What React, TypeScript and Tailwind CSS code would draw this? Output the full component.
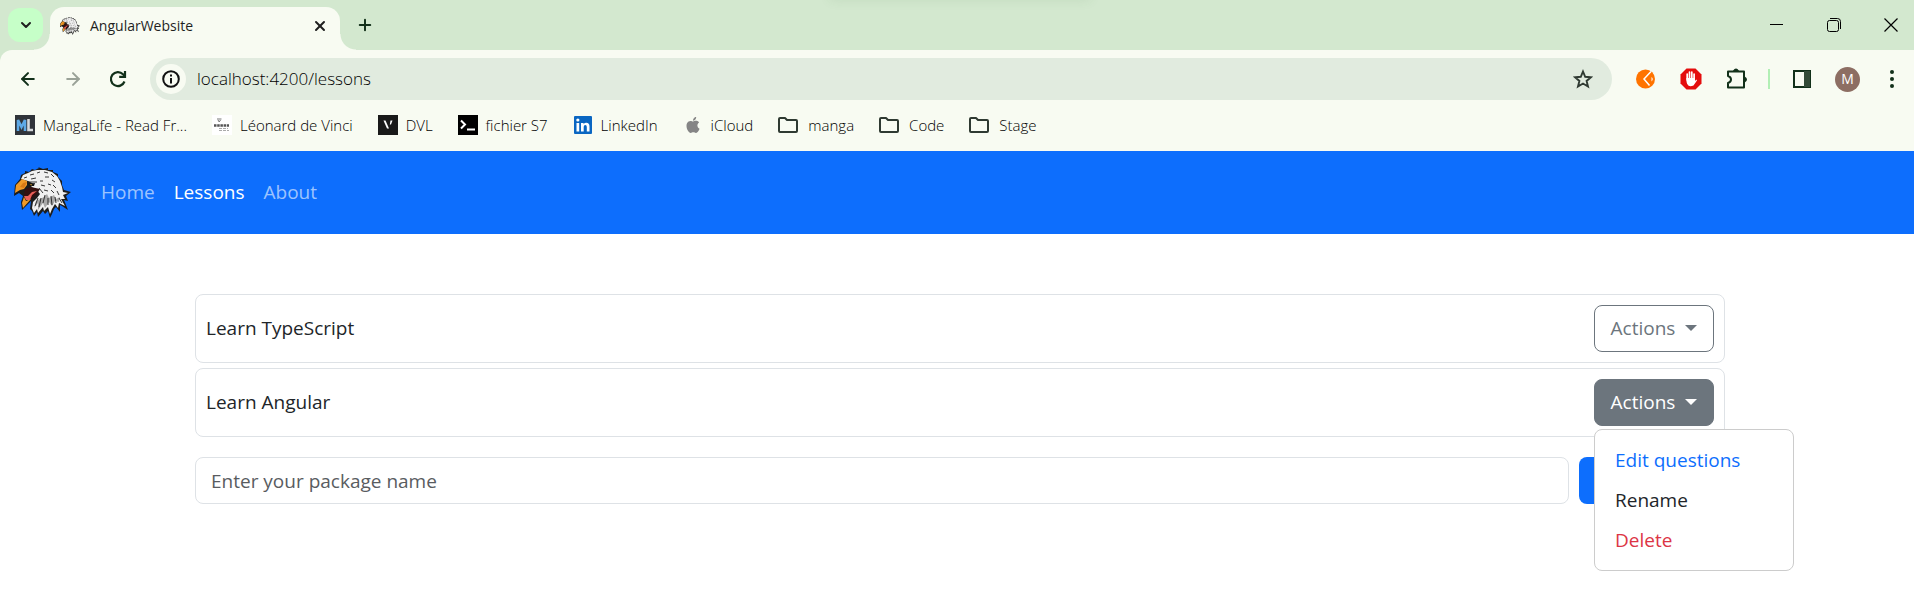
import { ArrowLeft, ArrowRight, ChevronDown, Plus, X } from "lucide-react";
import type { ReactNode } from "react";

function Eagle({ className }: { className: string }) {
  return (
    <svg viewBox="0 0 57 51" className={className} aria-hidden="true">
      <path
        d="M6 12 L7 8 L11 6 L11 4 L15 5 L18 2 L21 3 L25 1 L24 0 L29 2 L34 1 L34 3 L39 3 L39 5 L44 7 L44 10 L48 14 L48 18 L50 23 L57 25 L52 29 L54 34 L50 33 L54 43 L48 39 L46 38 L46 45 L42 40 L40 42 L38 47 L36 51 L34 44 L31 47 L29 44 L24 50 L23 45 L20 49 L18 44 L16 42 L17 34 L8 43 L7 35 L9 29 L5 26 L0 29 L1 18 Z"
        fill="#1c1c1c"
      />
      <path
        d="M7 12 L9 8 L14 6 L18 4 L23 3 L31 3 L38 5 L43 9 L46 14 L48 20 L49 25 L54 26 L49 28 L51 32 L47 32 L51 39 L45 36 L44 41 L41 37 L38 42 L36 47 L34 40 L30 44 L29 40 L24 46 L23 42 L20 46 L18 41 L19 35 L23 31 L26 27 L22 22 L17 20 L20 17 L14 14 Z"
        fill="#f0f0f0"
      />
      <path
        d="M30 30 L33 27 L35 31 L40 28 L42 32 L46 30 L45 35 L41 34 L38 39 L35 35 L31 41 L29 36 L24 43 L24 36 L20 41 L22 34 Z"
        fill="#a8a8a8"
      />
      <path d="M1 26 L2 18 L8 12 L13 14 L13 18 L10 22 L6 23 Z M9 41 L8 36 L10 30 L12 34 L17 32 Z" fill="#f09a28" />
      <path d="M6 20 L9 16 L13 15 L10 21 Z" fill="#d97a16" />
      <path d="M11 22 L17 20 L26 22 L23 27 L17 32 L12 33 L10 28 Z" fill="#341010" />
      <path d="M10 29 L14 29 L18 25 L23 24 L18 28 L16 33 L12 33 Z" fill="#ea5f58" />
      <path d="M14 17 L21 16 L20 19 L16 19 Z" fill="#141414" />
      <path d="M15.500 17.500 L18 17.200 L17.500 18.500 Z" fill="#e9a92c" />
      <path
        d="M10 11 L13 10 M16 8 L20 7 M23 6 L26 5 M30 5 L34 6 M37 7 L40 10 M17 12 L22 11 M31 10 L35 10 M38 13 L41 15 M13 15 L23 15 M26 14 L29 14 M39 18 L42 21 M27 18 L31 19 M34 17 L37 18 M30 23 L34 24 M37 23 L40 26 M43 24 L45 28 M25 21 L29 26 M24 31 L21 39 M27 31 L25 40 M31 28 L29 36 M34 31 L34 38 M37 29 L38 38 M41 30 L42 36 M45 31 L48 36"
        stroke="#222"
        strokeWidth=".9"
        fill="none"
      />
    </svg>
  );
}

function Folder() {
  return (
    <svg viewBox="0 0 20 18" className="h-[18px] w-5" fill="none" stroke="#2f3a32" strokeWidth="2" strokeLinejoin="round" aria-hidden="true">
      <path d="M1 3 Q1 2 2 2 H7 L9 4 H18 Q19 4 19 5 V15 Q19 16 18 16 H2 Q1 16 1 15 Z" />
    </svg>
  );
}

function Bookmark({ icon, label, folder }: { icon: ReactNode; label: string; folder?: boolean }) {
  return (
    <a href="#" className={`flex items-center whitespace-nowrap ${folder ? "gap-[10px]" : "gap-2"}`}>
      <span className="flex w-5 justify-center">{icon}</span>
      {label}
    </a>
  );
}

const bookmarks = [
  {
    label: "MangaLife - Read Fr...",
    icon: (
      <svg viewBox="0 0 20 20" className="size-5" aria-hidden="true">
        <path d="M0 0H20V20H0Z" fill="#30343a" />
        <path d="M3 16V5L6.500 12L10 5V16" fill="none" stroke="#5ea9e6" strokeWidth="2.600" />
        <path d="M13.500 4V15H18" fill="none" stroke="#d6d9dc" strokeWidth="2.600" />
      </svg>
    ),
  },
  {
    label: "Léonard de Vinci",
    icon: (
      <svg viewBox="0 0 20 20" className="size-5" aria-hidden="true">
        <path d="M0 0H20V20H0Z" fill="#fff" />
        <path d="M5 4H9.500M6 5L7.200 7L8.500 5" fill="none" stroke="#777" />
        <path d="M2 10.500H17" stroke="#555" strokeWidth="2.500" strokeDasharray="2.500 .7" />
        <path d="M7 13.500H16M7 15.500H17" stroke="#aaa" strokeDasharray="3 1" />
      </svg>
    ),
  },
  {
    label: "DVL",
    icon: (
      <svg viewBox="0 0 20 20" className="size-5" aria-hidden="true">
        <path d="M0 0H20V20H0Z" fill="#191919" />
        <path d="M5.500 5.500H7.500L11 13.500H9ZM12.500 5.500H14.500L13 9.500H11.800Z" fill="#fff" />
      </svg>
    ),
  },
  {
    label: "fichier S7",
    icon: (
      <svg viewBox="0 0 20 20" className="size-5" aria-hidden="true">
        <path d="M0 0H20V20H0Z" fill="#000" />
        <path d="M3 5.500L7 9.500L3 13.500M9 14.500H17" fill="none" stroke="#fff" strokeWidth="2" />
      </svg>
    ),
  },
  {
    label: "LinkedIn",
    icon: (
      <svg viewBox="0 0 18 18" className="size-[18px]" aria-hidden="true">
        <rect width="18" height="18" rx="1" fill="#0a66c2" />
        <path d="M2.500 7H5.200V15.500H2.500ZM7 7H9.600V8.200Q10.500 6.800 12.300 6.800Q15.500 6.800 15.500 10.500V15.500H12.800V11Q12.800 9.100 11.300 9.100Q9.700 9.100 9.700 11V15.500H7Z" fill="#fff" />
        <circle cx="3.850" cy="4" r="1.600" fill="#fff" />
      </svg>
    ),
  },
  {
    label: "iCloud",
    icon: (
      <svg viewBox="0 0 24 24" className="size-4" fill="#858585" aria-hidden="true">
        <path d="M12.152 6.896c-.948 0-2.415-1.078-3.960-1.040-2.040.027-3.910 1.183-4.961 3.014-2.117 3.675-.546 9.103 1.519 12.090 1.013 1.454 2.208 3.090 3.792 3.039 1.520-.065 2.090-.987 3.935-.987 1.831 0 2.350.987 3.960.948 1.637-.026 2.676-1.480 3.676-2.948 1.156-1.688 1.636-3.325 1.662-3.415-.039-.013-3.182-1.221-3.220-4.857-.026-3.040 2.480-4.494 2.597-4.559-1.429-2.090-3.623-2.324-4.390-2.376-2-.156-3.675 1.090-4.610 1.090zM15.530 3.830c.843-1.012 1.400-2.427 1.245-3.830-1.207.052-2.662.805-3.532 1.818-.780.896-1.454 2.338-1.273 3.714 1.338.104 2.715-.688 3.559-1.701" />
      </svg>
    ),
  },
  { label: "manga", icon: <Folder />, folder: true },
  { label: "Code", icon: <Folder />, folder: true },
  { label: "Stage", icon: <Folder />, folder: true },
];

function Browser() {
  return (
    <header className="text-sm text-[#1f1f1f]">
      <div className="relative flex h-[50px] items-end overflow-hidden bg-[#d3e8cf]">
        <div className="absolute -top-5 left-[830px] h-5 w-[260px] shadow-[0_0_12px_rgba(60,110,60,0.10)]" />
        <div className="flex h-full w-[50px] items-center pl-2">
          <button aria-label="Search tabs" className="flex h-[34px] w-[35px] items-center justify-center rounded-xl bg-[#c6ffc8]">
            <ChevronDown size={16} strokeWidth={3} />
          </button>
        </div>
        <div className="relative flex h-[43px] w-[290px] items-center rounded-t-[14px] bg-[#f8fbf2] pr-3 pb-[6px] pl-[10px]">
          <div className="absolute bottom-0 -left-4 size-4 bg-[radial-gradient(circle_at_0_0,transparent_15px,#f8fbf2_16px)]" />
          <div className="absolute -right-4 bottom-0 size-4 bg-[radial-gradient(circle_at_100%_0,transparent_15px,#f8fbf2_16px)]" />
          <Eagle className="h-5 w-5" />
          <span className="ml-[10px] flex-1">AngularWebsite</span>
          <button aria-label="Close tab" className="flex size-4 items-center justify-center">
            <X size={16} strokeWidth={3} />
          </button>
        </div>
        <button aria-label="New tab" className="mb-4 ml-4 text-[#12301a]">
          <Plus size={18} strokeWidth={2.6} />
        </button>
        <div className="ml-auto flex h-full items-center gap-[43px] pr-4">
          <button aria-label="Minimize">
            <svg viewBox="0 0 14 14" className="size-[14px]" stroke="#000" aria-hidden="true"><path d="M0 6.500H13" /></svg>
          </button>
          <button aria-label="Restore">
            <svg viewBox="0 0 14 14" className="size-[14px]" fill="none" stroke="#000" aria-hidden="true">
              <rect x=".5" y="2.500" width="11" height="11" rx="2" />
              <path d="M3 .5H10.500Q13.500 .5 13.500 3.500V11" />
            </svg>
          </button>
          <button aria-label="Close">
            <svg viewBox="0 0 14 14" className="size-[14px]" stroke="#000" strokeWidth="1.200" aria-hidden="true"><path d="M.5 .5L13.500 13.500M13.500 .5L.5 13.500" /></svg>
          </button>
        </div>
      </div>

      <div className="bg-[#d3e8cf]">
        <div className="rounded-tl-xl bg-[#f8fbf2]">
          <div className="flex items-center pt-2 pr-[10px] text-[#12301a]">
            <div className="flex w-[150px] items-center gap-[25px] pl-[18px]">
              <button aria-label="Back"><ArrowLeft size={20} strokeWidth={2.4} /></button>
              <button aria-label="Forward" className="text-[#9aa298]"><ArrowRight size={20} strokeWidth={2.4} /></button>
              <button aria-label="Reload">
                <svg viewBox="0 0 20 20" className="size-5" fill="none" stroke="currentColor" strokeWidth="2.200" aria-hidden="true">
                  <path d="M16.500 12.500A7 7 0 1 1 15 5.200L17 7.200" />
                  <path d="M17 2V7.800H11.200" />
                </svg>
              </button>
            </div>
            <div className="flex h-[42px] flex-1 items-center rounded-full bg-[#e1ebdf] pr-[19px] pl-[6px]">
              <button aria-label="Site information" className="flex size-[30px] items-center justify-center rounded-full bg-[#f8fbf2]">
                <svg viewBox="0 0 18 18" className="size-[18px]" fill="none" stroke="#111" strokeWidth="2" aria-hidden="true">
                  <circle cx="9" cy="9" r="7.800" />
                  <path d="M9 8V13.500M9 4.500V6.500" />
                </svg>
              </button>
              <input aria-label="Address" defaultValue="localhost:4200/lessons" className="ml-[11px] flex-1 bg-transparent text-[17px] font-light text-black outline-none" />
              <button aria-label="Bookmark this page">
                <svg viewBox="0 0 20 20" className="size-5" fill="none" stroke="#2f3a32" strokeWidth="1.900" aria-hidden="true">
                  <path d="M10 2.500L12.200 7.800L18 8.200L13.600 11.900L15 17.500L10 14.500L5 17.500L6.400 11.900L2 8.200L7.800 7.800Z" />
                </svg>
              </button>
            </div>
            <div className="flex items-center pl-6">
              <button aria-label="Orange extension">
                <svg viewBox="0 0 20 20" className="size-5" aria-hidden="true">
                  <circle cx="9.500" cy="10" r="9.500" fill="#ff7300" />
                  <path d="M15 2.500L8 10L13.500 16.500" fill="none" stroke="#fff" strokeWidth="1.500" />
                  <path d="M15.500 8Q18 10 15.500 12.500Z" fill="#fff" />
                </svg>
              </button>
              <button aria-label="Ad blocker" className="ml-6">
                <svg viewBox="0 0 22 22" className="size-[22px]" aria-hidden="true">
                  <path d="M6.500 .5H15.500L21.500 6.500V15.500L15.500 21.500H6.500L.5 15.500V6.500Z" fill="#e40d0d" />
                  <path d="M7.200 12V6M9.500 11V4M11.800 11V4M14.100 12V6" stroke="#fff" strokeWidth="1.700" strokeLinecap="round" />
                  <path d="M6.400 10H15V13L16.300 11.500L17 12.500L13.500 17.500Q9 19.500 7.200 16Q6.300 14 6.400 10Z" fill="#fff" />
                </svg>
              </button>
              <button aria-label="Extensions" className="ml-6">
                <svg viewBox="0 0 22 22" className="size-[22px]" fill="none" stroke="currentColor" strokeWidth="2" strokeLinejoin="round" aria-hidden="true">
                  <path d="M2 3.500H18V19.500H2V15Q5 14 5 11.500Q5 9 2 8Z" />
                  <path d="M8 3Q10 0 12 3ZM18.500 9.500Q21.500 11.500 18.500 13.500Z" fill="currentColor" />
                </svg>
              </button>
              <span className="ml-5 h-5 w-[2px] bg-[#b2efb5]" />
              <button aria-label="Side panel" className="ml-[23px]">
                <svg viewBox="0 0 18 18" className="size-[18px]" aria-hidden="true">
                  <path d="M1 1H17V17H1Z" fill="none" stroke="#12301a" strokeWidth="2" />
                  <path d="M11 1H17V17H11Z" fill="#334a37" />
                </svg>
              </button>
              <button aria-label="Profile" className="ml-[24px] flex size-[25px] items-center justify-center rounded-full bg-[#8d6e63] text-sm text-white">M</button>
              <button aria-label="Menu" className="ml-5">
                <svg viewBox="0 0 24 24" className="size-6" fill="currentColor" aria-hidden="true">
                  <circle cx="12" cy="5" r="2" /><circle cx="12" cy="12" r="2" /><circle cx="12" cy="19" r="2" />
                </svg>
              </button>
            </div>
          </div>
          <nav aria-label="Bookmarks" className="flex h-[51px] items-center gap-[25px] pl-[15px] text-[15px] font-light text-black">
            {bookmarks.map((b) => (
              <Bookmark key={b.label} {...b} />
            ))}
          </nav>
        </div>
      </div>
    </header>
  );
}

function Caret() {
  return <span className="mb-[2px] border-x-[6px] border-t-[6px] border-x-transparent" />;
}

const actionButton = "flex h-[47px] w-[120px] items-center justify-center gap-[10px] rounded-lg border border-[#6c757d]";

export default function App() {
  return (
    <div className="min-h-screen bg-white font-['Open_Sans','Noto_Sans',sans-serif]">
      <Browser />
      <nav className="flex h-[83px] items-center bg-[#0d6efd] pl-[14px] text-[19px] text-white/60">
        <a href="#" aria-label="Home page"><Eagle className="h-[51px] w-[57px]" /></a>
        <div className="ml-[30px] flex gap-[19px]">
          <a href="#">Home</a>
          <a href="#" className="text-white">Lessons</a>
          <a href="#">About</a>
        </div>
      </nav>
      <main className="pt-[60px] pr-[189px] pb-8 pl-[195px] text-[19px] text-[#212529]">
        <ul className="flex flex-col gap-[5px]">
          <li className="flex items-center justify-between rounded-lg border border-[#dee2e6] p-[10px]">
            Learn TypeScript
            <button className={`${actionButton} text-[#6c757d]`}>Actions <Caret /></button>
          </li>
          <li className="flex items-center justify-between rounded-lg border border-[#dee2e6] p-[10px]">
            Learn Angular
            <div className="relative">
              <button aria-expanded="true" className={`${actionButton} bg-[#6c757d] text-white`}>Actions <Caret /></button>
              <div className="absolute top-full left-0 z-10 mt-[3px] flex w-[200px] flex-col rounded-lg border border-[#ccc] bg-white py-[10px]">
                <a href="#" className="flex h-10 items-center px-5 text-[#0d6efd]">Edit questions</a>
                <button className="flex h-10 items-center px-5">Rename</button>
                <button className="flex h-10 items-center px-5 text-[#dc3545]">Delete</button>
              </div>
            </div>
          </li>
        </ul>
        <form className="mt-5 flex gap-[10px]">
          <input aria-label="Package name" placeholder="Enter your package name" className="h-[47px] min-w-0 flex-1 rounded-lg border border-[#dee2e6] px-[15px] outline-none placeholder:text-[#595c5f]" />
          <button type="button" aria-label="Add package" className="h-[47px] w-[146px] rounded-lg bg-[#0d6efd]" />
        </form>
      </main>
    </div>
  );
}
